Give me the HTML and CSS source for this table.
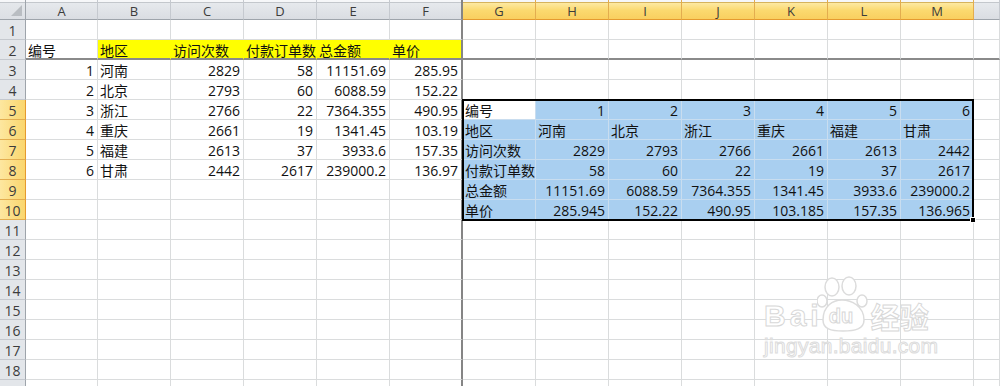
FILE: index.html
```html
<!DOCTYPE html>
<html lang="zh-CN">
<head>
<meta charset="utf-8">
<title>Sheet</title>
<link rel="stylesheet" href="styles.css">
</head>
<body>
<div class="sheet">
  <div class="cn"></div><div class="h">A</div><div class="h">B</div><div class="h">C</div><div class="h">D</div><div class="h">E</div><div class="h f">F</div><div class="h hs">G</div><div class="h hs">H</div><div class="h hs">I</div><div class="h hs">J</div><div class="h hs">K</div><div class="h hs">L</div><div class="h hs">M</div><div class="h"></div>

  <div class="r">1</div><div class="c"></div><div class="c"></div><div class="c"></div><div class="c"></div><div class="c"></div><div class="c f"></div><div class="c"></div><div class="c"></div><div class="c"></div><div class="c"></div><div class="c"></div><div class="c"></div><div class="c"></div><div class="c"></div>

  <div class="r">2</div><div class="c b2">编号</div><div class="c y b2">地区</div><div class="c y b2">访问次数</div><div class="c y b2">付款订单数</div><div class="c y b2">总金额</div><div class="c y f b2">单价</div><div class="c b2"></div><div class="c b2"></div><div class="c b2"></div><div class="c b2"></div><div class="c b2"></div><div class="c b2"></div><div class="c b2"></div><div class="c b2"></div>

  <div class="r">3</div><div class="c n">1</div><div class="c">河南</div><div class="c n">2829</div><div class="c n">58</div><div class="c n">11151.69</div><div class="c n f">285.95</div><div class="c"></div><div class="c"></div><div class="c"></div><div class="c"></div><div class="c"></div><div class="c"></div><div class="c"></div><div class="c"></div>

  <div class="r">4</div><div class="c n">2</div><div class="c">北京</div><div class="c n">2793</div><div class="c n">60</div><div class="c n">6088.59</div><div class="c n f">152.22</div><div class="c"></div><div class="c"></div><div class="c"></div><div class="c"></div><div class="c"></div><div class="c"></div><div class="c"></div><div class="c"></div>

  <div class="r rs">5</div><div class="c n">3</div><div class="c">浙江</div><div class="c n">2766</div><div class="c n">22</div><div class="c n">7364.355</div><div class="c n f">490.95</div><div class="c act">编号</div><div class="c s n">1</div><div class="c s n">2</div><div class="c s n">3</div><div class="c s n">4</div><div class="c s n">5</div><div class="c s n">6</div><div class="c"></div>

  <div class="r rs">6</div><div class="c n">4</div><div class="c">重庆</div><div class="c n">2661</div><div class="c n">19</div><div class="c n">1341.45</div><div class="c n f">103.19</div><div class="c s">地区</div><div class="c s">河南</div><div class="c s">北京</div><div class="c s">浙江</div><div class="c s">重庆</div><div class="c s">福建</div><div class="c s">甘肃</div><div class="c"></div>

  <div class="r rs">7</div><div class="c n">5</div><div class="c">福建</div><div class="c n">2613</div><div class="c n">37</div><div class="c n">3933.6</div><div class="c n f">157.35</div><div class="c s">访问次数</div><div class="c s n">2829</div><div class="c s n">2793</div><div class="c s n">2766</div><div class="c s n">2661</div><div class="c s n">2613</div><div class="c s n">2442</div><div class="c"></div>

  <div class="r rs">8</div><div class="c n">6</div><div class="c">甘肃</div><div class="c n">2442</div><div class="c n">2617</div><div class="c n">239000.2</div><div class="c n f">136.97</div><div class="c s">付款订单数</div><div class="c s n">58</div><div class="c s n">60</div><div class="c s n">22</div><div class="c s n">19</div><div class="c s n">37</div><div class="c s n">2617</div><div class="c"></div>

  <div class="r rs">9</div><div class="c"></div><div class="c"></div><div class="c"></div><div class="c"></div><div class="c"></div><div class="c f"></div><div class="c s">总金额</div><div class="c s n">11151.69</div><div class="c s n">6088.59</div><div class="c s n">7364.355</div><div class="c s n">1341.45</div><div class="c s n">3933.6</div><div class="c s n">239000.2</div><div class="c"></div>

  <div class="r rs">10</div><div class="c"></div><div class="c"></div><div class="c"></div><div class="c"></div><div class="c"></div><div class="c f"></div><div class="c s">单价</div><div class="c s n">285.945</div><div class="c s n">152.22</div><div class="c s n">490.95</div><div class="c s n">103.185</div><div class="c s n">157.35</div><div class="c s n">136.965</div><div class="c"></div>

  <div class="r">11</div><div class="c"></div><div class="c"></div><div class="c"></div><div class="c"></div><div class="c"></div><div class="c f"></div><div class="c"></div><div class="c"></div><div class="c"></div><div class="c"></div><div class="c"></div><div class="c"></div><div class="c"></div><div class="c"></div>

  <div class="r">12</div><div class="c"></div><div class="c"></div><div class="c"></div><div class="c"></div><div class="c"></div><div class="c f"></div><div class="c"></div><div class="c"></div><div class="c"></div><div class="c"></div><div class="c"></div><div class="c"></div><div class="c"></div><div class="c"></div>

  <div class="r">13</div><div class="c"></div><div class="c"></div><div class="c"></div><div class="c"></div><div class="c"></div><div class="c f"></div><div class="c"></div><div class="c"></div><div class="c"></div><div class="c"></div><div class="c"></div><div class="c"></div><div class="c"></div><div class="c"></div>

  <div class="r">14</div><div class="c"></div><div class="c"></div><div class="c"></div><div class="c"></div><div class="c"></div><div class="c f"></div><div class="c"></div><div class="c"></div><div class="c"></div><div class="c"></div><div class="c"></div><div class="c"></div><div class="c"></div><div class="c"></div>

  <div class="r">15</div><div class="c"></div><div class="c"></div><div class="c"></div><div class="c"></div><div class="c"></div><div class="c f"></div><div class="c"></div><div class="c"></div><div class="c"></div><div class="c"></div><div class="c"></div><div class="c"></div><div class="c"></div><div class="c"></div>

  <div class="r">16</div><div class="c"></div><div class="c"></div><div class="c"></div><div class="c"></div><div class="c"></div><div class="c f"></div><div class="c"></div><div class="c"></div><div class="c"></div><div class="c"></div><div class="c"></div><div class="c"></div><div class="c"></div><div class="c"></div>

  <div class="r">17</div><div class="c"></div><div class="c"></div><div class="c"></div><div class="c"></div><div class="c"></div><div class="c f"></div><div class="c"></div><div class="c"></div><div class="c"></div><div class="c"></div><div class="c"></div><div class="c"></div><div class="c"></div><div class="c"></div>

  <div class="r">18</div><div class="c"></div><div class="c"></div><div class="c"></div><div class="c"></div><div class="c"></div><div class="c f"></div><div class="c"></div><div class="c"></div><div class="c"></div><div class="c"></div><div class="c"></div><div class="c"></div><div class="c"></div><div class="c"></div>

  <div class="r"></div><div class="c"></div><div class="c"></div><div class="c"></div><div class="c"></div><div class="c"></div><div class="c f"></div><div class="c"></div><div class="c"></div><div class="c"></div><div class="c"></div><div class="c"></div><div class="c"></div><div class="c"></div><div class="c"></div>

  <div class="sel"><div class="handle"></div></div>

  <div class="wm">
    <div class="wm1"><span class="bai">Bai</span><span class="paw"><svg width="52" height="56" viewBox="0 0 52 56"><ellipse cx="15" cy="11" rx="7" ry="9" fill="#fff" stroke="#dcdcdc" stroke-width="1.5"/><ellipse cx="32" cy="10" rx="7" ry="9" fill="#fff" stroke="#dcdcdc" stroke-width="1.5"/><ellipse cx="5" cy="25" rx="5" ry="6" fill="#fff" stroke="#dcdcdc" stroke-width="1.5"/><ellipse cx="45" cy="25" rx="5" ry="6" fill="#fff" stroke="#dcdcdc" stroke-width="1.5"/><path d="M6 44 C6 30 16 24 25 24 C34 24 47 30 47 44 C47 53 38 55 26 55 C14 55 6 53 6 44 Z" fill="#fff" stroke="#dcdcdc" stroke-width="1.5"/></svg><span class="du">du</span></span><span class="jy">经验</span></div>
    <div class="wm2">jingyan.baidu.com</div>
  </div>
</div>
</body>
</html>
```

FILE: styles.css
```css
* {
  box-sizing: border-box;
}

html, body {
  margin: 0;
  padding: 0;
  background: #ffffff;
  overflow: hidden;
}

body {
  font-family: "Open Sans", "Noto Sans CJK SC", sans-serif;
  font-size: 14px;
  color: #000;
  width: 1000px;
  height: 386px;
}

.sheet {
  position: relative;
  display: grid;
  grid-template-columns: 26px 72px repeat(12, 73px) 26px;
  grid-auto-rows: 20px;
  width: 1000px;
}

.cn {
  position: relative;
  background: linear-gradient(#f6f7f9 0 2px, #c3c7cc 2px 3px, #e4e7eb 3px, #dcdfe4);
  border-right: 1px solid #9ea4ab;
  border-bottom: 1px solid #9ea4ab;
}

.cn::after {
  content: "";
  position: absolute;
  right: 3px;
  bottom: 3px;
  width: 0;
  height: 0;
  border-left: 11px solid transparent;
  border-bottom: 11px solid #b9bdc2;
}

.h {
  background: linear-gradient(#f6f7f9 0 2px, #c3c7cc 2px 3px, #e6e9ed 3px, #dadde2);
  border-right: 1px solid #c5c9cf;
  border-bottom: 1px solid #9ea4ab;
  text-align: center;
  font-size: 13px;
  color: #3c3c3c;
  padding-top: 3px;
  line-height: 16px;
}

.h.hs {
  background: linear-gradient(#f6f7f9 0 2px, #d6b35c 2px 3px, #fde9a2 3px, #fbd96f 55%, #f9cf5f);
  border-right-color: #e3ad4f;
  border-bottom-color: #e59a2f;
}

.h.f {
  border-right: 2px solid #858585;
}

.r {
  background: #e3e6ea;
  border-right: 1px solid #9ea4ab;
  border-bottom: 1px solid #c5c9cf;
  text-align: center;
  font-size: 14px;
  color: #3c3c3c;
  padding-top: 3px;
  line-height: 16px;
}

.r.rs {
  background: linear-gradient(90deg, #fde7a0, #fad66d);
  border-bottom-color: #e3ad4f;
  border-right-color: #e59a2f;
}

.c {
  border-right: 1px solid #dadcdd;
  border-bottom: 1px solid #dadcdd;
  padding: 3px 2px 0 2px;
  line-height: 16px;
  white-space: nowrap;
  overflow: visible;
  color: #111;
}

.n {
  text-align: right;
  padding-right: 3px;
}

.y {
  background: #ffff00;
  border-right-color: #ffff00;
}

.f {
  border-right: 2px solid #858585;
}

.b2 {
  border-bottom: 2px solid #8a8a8a;
}

.s {
  background: #a9cff0;
  border-right-color: #c9ddef;
  border-bottom-color: #c9ddef;
}

.act {
  background: #ffffff;
  border-right-color: #c9ddef;
  border-bottom-color: #c9ddef;
}

.sel {
  position: absolute;
  left: 462px;
  top: 99px;
  width: 512px;
  height: 122px;
  border: 2px solid #000;
  pointer-events: none;
}

.handle {
  position: absolute;
  right: -4px;
  bottom: -4px;
  width: 6px;
  height: 6px;
  background: #000;
  border: 1px solid #fff;
}

.wm {
  position: absolute;
  left: 764px;
  top: 276px;
  pointer-events: none;
}

.wm1 {
  display: flex;
  align-items: flex-end;
  height: 56px;
}

.bai {
  font-family: "Liberation Sans", sans-serif;
  font-weight: bold;
  font-size: 30px;
  letter-spacing: 4px;
  line-height: 30px;
  color: #fff;
  -webkit-text-stroke: 1px #d8d8d8;
  margin-bottom: 1px;
}

.paw {
  position: relative;
  display: block;
  width: 52px;
  height: 56px;
  margin-left: -6px;
}

.paw svg {
  display: block;
}

.du {
  position: absolute;
  left: 12px;
  top: 29px;
  font-family: "Liberation Sans", sans-serif;
  font-weight: bold;
  font-size: 20px;
  line-height: 22px;
  color: #fff;
  -webkit-text-stroke: 1px #d8d8d8;
}

.jy {
  font-family: "Noto Sans CJK SC", sans-serif;
  font-weight: bold;
  font-size: 29px;
  line-height: 32px;
  color: #fff;
  -webkit-text-stroke: 1px #d8d8d8;
  margin-left: 2px;
}

.wm2 {
  font-family: "Liberation Sans", sans-serif;
  font-size: 21px;
  line-height: 24px;
  letter-spacing: 0.3px;
  color: #fff;
  -webkit-text-stroke: 1px #dcdcdc;
  margin-top: 2px;
}
```
